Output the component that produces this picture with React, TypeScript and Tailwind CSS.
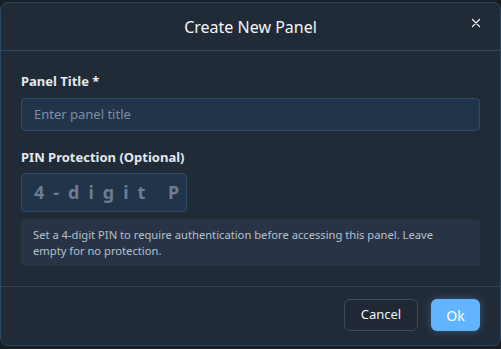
import React from "react";

export default function App() {
  return (
    <div
      className="w-[501px] h-[349px] bg-[#1a1e24] pt-[2px] overflow-hidden"
      style={{ fontFamily: '"Noto Sans", "Open Sans", sans-serif' }}
    >
      <div className="w-[501px] h-[344px] bg-[#212a37] border border-[#2b4761] rounded-[8px] flex flex-col overflow-hidden">
        <div className="relative h-[48px] shrink-0 flex items-center justify-center border-b border-[#2d4a64]">
          <span className="text-[16px] text-[#f3f6fa]">Create New Panel</span>
          <span className="absolute right-[18px] top-[14px] text-[#e8edf3]">
            <svg width="12" height="12" viewBox="0 0 12 12">
              <path d="M2.5 2.5 L9.5 9.5 M9.5 2.5 L2.5 9.5" stroke="currentColor" strokeWidth="1.3" strokeLinecap="round" />
            </svg>
          </span>
        </div>
        <div className="shrink-0 px-[20px] pt-[21px] pb-[20px] flex flex-col">
          <label className="text-[13px] font-bold text-[#e3e8ee] leading-[18px]">Panel Title *</label>
          <div className="mt-[8px] h-[33px] rounded-[4px] bg-[#22344a] border border-[#2f4b67] flex items-center px-[12px]">
            <span className="text-[13px] text-[#7f8fa3]">Enter panel title</span>
          </div>
          <label className="mt-[17px] text-[13px] font-bold text-[#e3e8ee] leading-[18px]">PIN Protection (Optional)</label>
          <div className="mt-[7px] w-[166px] h-[39px] rounded-[4px] bg-[#22344a] border border-[#2f4b67] flex items-center px-[12px] overflow-hidden">
            <span className="text-[18px] font-bold text-[#6b7d92] tracking-[0.5em] whitespace-nowrap">4-digit P</span>
          </div>
          <div className="mt-[7px] rounded-[4px] bg-[#283445] px-[12px] py-[8px] text-[11.2px] leading-[15.5px] text-[#b5c1cf]">
            Set a 4-digit PIN to require authentication before accessing this panel. Leave empty for no protection.
          </div>
        </div>
        <div className="flex-1 border-t border-[#38414d] flex items-start justify-end gap-[13px] px-[20px] pt-[12px]">
          <button className="h-[32px] w-[74px] rounded-[6px] border border-[#3b4d60] bg-[#1f2834] text-[13px] text-[#f0f3f7]">Cancel</button>
          <button className="h-[32px] w-[49px] rounded-[6px] bg-[#63b4ff] text-[14px] text-white shadow-[0_0_10px_rgba(99,180,255,0.35)]">Ok</button>
        </div>
      </div>
    </div>
  );
}
